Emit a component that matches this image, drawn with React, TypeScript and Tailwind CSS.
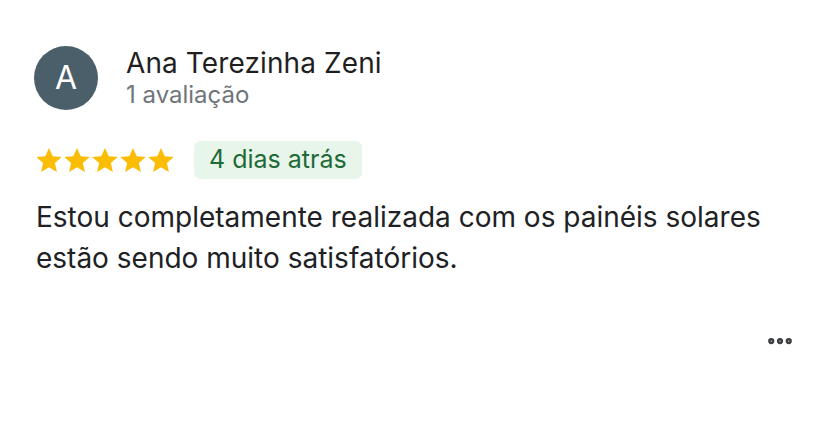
import { MoreHorizontal } from "lucide-react"

function Star() {
  return (
    <svg width="28" height="28" viewBox="1 1 22 22" className="text-[#fbbc04]">
      <path
        fill="currentColor"
        d="M12 2.5l2.9 6.6 7.1.6-5.4 4.7 1.6 7-6.2-3.7-6.2 3.7 1.6-7L2 9.7l7.1-.6z"
      />
    </svg>
  )
}

export default function App() {
  return (
    <div
      className="w-[828px] h-[427px] bg-white text-[#202124] overflow-hidden"
      style={{ fontFamily: "Inter, 'Noto Sans', sans-serif" }}
    >
      <div className="pl-[34px] pr-[33px] pt-[46px]">
        <div className="flex items-center gap-[28px]">
          <div className="w-[64px] h-[64px] rounded-full bg-[#4a5f69] flex items-center justify-center text-white text-[32px] leading-none">
            A
          </div>
          <div className="flex flex-col">
            <div className="text-[28px] leading-[34px] tracking-[0.1px] text-[#1f1f1f]">Ana Terezinha Zeni</div>
            <div className="text-[24px] leading-[30px] text-[#70757a]">1 avaliação</div>
          </div>
        </div>

        <div className="flex items-center mt-[31px] pl-[1px]">
          <div className="flex">
            <Star />
            <Star />
            <Star />
            <Star />
            <Star />
          </div>
          <div className="ml-[19px] h-[38px] px-[15px] flex items-center rounded-[6px] bg-[#e8f5ea] text-[#1e6b37] text-[25px]">
            4 dias atrás
          </div>
        </div>

        <div className="mt-[18px] pl-[2px] text-[28px] leading-[41px] text-[#202124]">
          Estou completamente realizada com os painéis solares
          <br />
          estão sendo muito satisfatórios.
        </div>

        <div className="flex justify-end mt-[47px]">
          <MoreHorizontal size={30} strokeWidth={3} className="text-[#3c4043]" />
        </div>
      </div>
    </div>
  )
}
